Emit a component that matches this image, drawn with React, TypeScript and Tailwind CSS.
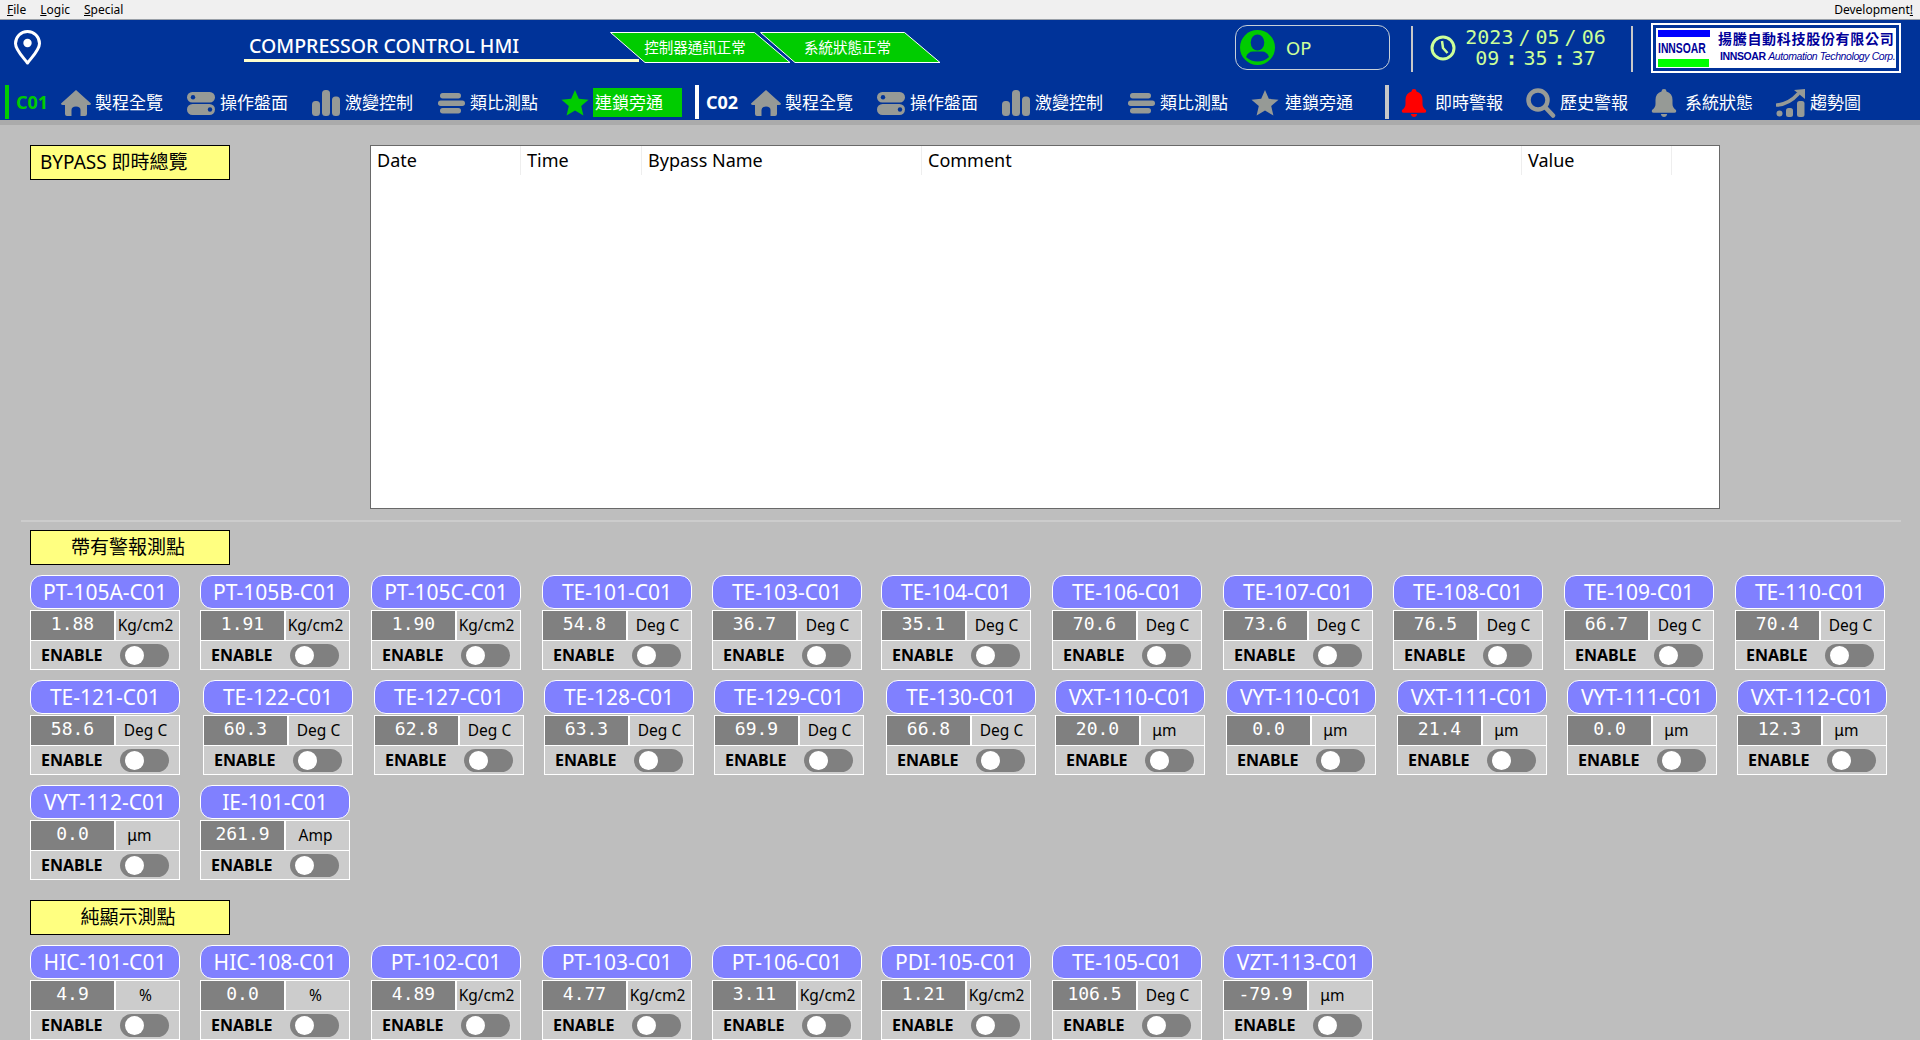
import type { ReactNode } from 'react';

type Point = { tag: string; value: string; unit: string };

const KG = 'Kg/cm2';
const DEG = 'Deg C';
// the reference leaves trailing blanks after this unit
const UM = 'μm\u00a0\u00a0\u00a0';

const alarmRowA: Point[] = [
  { tag: 'PT-105A-C01', value: '1.88', unit: KG },
  { tag: 'PT-105B-C01', value: '1.91', unit: KG },
  { tag: 'PT-105C-C01', value: '1.90', unit: KG },
  { tag: 'TE-101-C01', value: '54.8', unit: DEG },
  { tag: 'TE-103-C01', value: '36.7', unit: DEG },
  { tag: 'TE-104-C01', value: '35.1', unit: DEG },
  { tag: 'TE-106-C01', value: '70.6', unit: DEG },
  { tag: 'TE-107-C01', value: '73.6', unit: DEG },
  { tag: 'TE-108-C01', value: '76.5', unit: DEG },
  { tag: 'TE-109-C01', value: '66.7', unit: DEG },
  { tag: 'TE-110-C01', value: '70.4', unit: DEG },
];

const alarmRowB: Point[] = [
  { tag: 'TE-121-C01', value: '58.6', unit: DEG },
  { tag: 'TE-122-C01', value: '60.3', unit: DEG },
  { tag: 'TE-127-C01', value: '62.8', unit: DEG },
  { tag: 'TE-128-C01', value: '63.3', unit: DEG },
  { tag: 'TE-129-C01', value: '69.9', unit: DEG },
  { tag: 'TE-130-C01', value: '66.8', unit: DEG },
  { tag: 'VXT-110-C01', value: '20.0', unit: UM },
  { tag: 'VYT-110-C01', value: '0.0', unit: UM },
  { tag: 'VXT-111-C01', value: '21.4', unit: UM },
  { tag: 'VYT-111-C01', value: '0.0', unit: UM },
  { tag: 'VXT-112-C01', value: '12.3', unit: UM },
];

const alarmRowC: Point[] = [
  { tag: 'VYT-112-C01', value: '0.0', unit: UM },
  { tag: 'IE-101-C01', value: '261.9', unit: 'Amp' },
];

const displayRow: Point[] = [
  { tag: 'HIC-101-C01', value: '4.9', unit: '%' },
  { tag: 'HIC-108-C01', value: '0.0', unit: '%' },
  { tag: 'PT-102-C01', value: '4.89', unit: KG },
  { tag: 'PT-103-C01', value: '4.77', unit: KG },
  { tag: 'PT-106-C01', value: '3.11', unit: KG },
  { tag: 'PDI-105-C01', value: '1.21', unit: KG },
  { tag: 'TE-105-C01', value: '106.5', unit: DEG },
  { tag: 'VZT-113-C01', value: '-79.9', unit: UM },
];

const ICON_GRAY = '#969a96';

function HomeIcon() {
  return (
    <svg width="30" height="26" viewBox="0 0 30 26">
      <path
        d="M15 0 L30 13.5 Q30 15 28 15 L26 15 L26 24 Q26 26 24 26 L19.5 26 L19.5 20 Q19.5 16.5 15 16.5 Q10.5 16.5 10.5 20 L10.5 26 L6 26 Q4 26 4 24 L4 15 L2 15 Q0 15 0 13.5 Z"
        fill={ICON_GRAY}
      />
    </svg>
  );
}

function TogglesIcon() {
  return (
    <svg width="30" height="26" viewBox="0 0 30 26">
      <rect x="1" y="2" width="28" height="10.5" rx="5.2" fill={ICON_GRAY} />
      <circle cx="7" cy="7.2" r="2.2" fill="#003399" />
      <rect x="1" y="14" width="28" height="11" rx="5.5" fill={ICON_GRAY} />
      <circle cx="24" cy="19.5" r="2.2" fill="#003399" />
    </svg>
  );
}

function BarsIcon() {
  return (
    <svg width="30" height="26" viewBox="0 0 30 26">
      <rect x="1" y="11" width="8" height="15" rx="3.5" fill={ICON_GRAY} />
      <rect x="11" y="0" width="8" height="26" rx="3.5" fill={ICON_GRAY} />
      <rect x="21" y="6.5" width="8" height="19.5" rx="3.5" fill={ICON_GRAY} />
    </svg>
  );
}

function ListIcon() {
  return (
    <svg width="30" height="26" viewBox="0 0 30 26">
      <rect x="4" y="3" width="21" height="5.5" rx="2.7" fill={ICON_GRAY} />
      <rect x="2" y="10.5" width="27" height="5.5" rx="2.7" fill={ICON_GRAY} />
      <rect x="4" y="18" width="21" height="5.5" rx="2.7" fill={ICON_GRAY} />
    </svg>
  );
}

function StarIcon({ color }: { color: string }) {
  return (
    <svg width="30" height="26" viewBox="0 0 30 26">
      <path
        d="M14 0 L17.8 8.8 L27.5 9.7 L20.2 16.1 L22.4 25.6 L14 20.6 L5.6 25.6 L7.8 16.1 L0.5 9.7 L10.2 8.8 Z"
        fill={color}
      />
    </svg>
  );
}

function BellIcon({ color }: { color: string }) {
  return (
    <svg width="30" height="30" viewBox="0 0 30 30">
      <path
        d="M13 1 Q15.5 1 15.5 3.4 Q21.5 5 21.5 12 L21.5 16 Q21.5 19.5 25 22 Q25.8 24.8 23.5 24.8 L2.5 24.8 Q0.2 24.8 1 22 Q4.5 19.5 4.5 16 L4.5 12 Q4.5 5 10.5 3.4 Q10.5 1 13 1 Z"
        fill={color}
      />
      <path d="M9.8 26 L16.2 26 Q15.5 29 13 29 Q10.5 29 9.8 26 Z" fill={color} />
    </svg>
  );
}

function SearchIcon() {
  return (
    <svg width="30" height="30" viewBox="0 0 30 30">
      <circle cx="12" cy="12" r="9.5" fill="none" stroke={ICON_GRAY} strokeWidth="4.5" />
      <path d="M19 19 L27 27.5" stroke={ICON_GRAY} strokeWidth="4.5" strokeLinecap="round" />
    </svg>
  );
}

function TrendIcon() {
  return (
    <svg width="30" height="30" viewBox="0 0 30 30">
      <circle cx="3.5" cy="25.5" r="3" fill={ICON_GRAY} />
      <rect x="10" y="20" width="7" height="9" rx="2.5" fill={ICON_GRAY} />
      <rect x="21" y="13" width="7.5" height="16" rx="2.5" fill={ICON_GRAY} />
      <path d="M1 17 Q13 16 22 6" fill="none" stroke={ICON_GRAY} strokeWidth="3.5" strokeLinecap="round" />
      <path d="M18 2 L29 1 L29 11 Z" fill={ICON_GRAY} />
    </svg>
  );
}

function PinIcon() {
  return (
    <svg width="27" height="35" viewBox="0 0 27 35">
      <path
        d="M13.5 33 C9 27 1.5 20 1.5 13.5 A12 12 0 0 1 25.5 13.5 C25.5 20 18 27 13.5 33 Z"
        fill="none"
        stroke="#ffffff"
        strokeWidth="3"
        strokeLinejoin="round"
      />
      <circle cx="13.5" cy="13" r="4.2" fill="#ffffff" />
    </svg>
  );
}

function NavItem({ icon, label, active }: { icon: ReactNode; label: string; active?: boolean }) {
  return (
    <div className="flex h-[35px] w-[125px] shrink-0 items-center">
      <span className="flex w-[30px] shrink-0 justify-center">{icon}</span>
      {active ? (
        <span className="ml-[2px] flex h-[29px] w-[89px] shrink-0 items-center bg-[#00cc00] pl-[2px] text-[17px] text-white">
          {label}
        </span>
      ) : (
        <span className="ml-[4px] text-[17px] whitespace-nowrap text-white">{label}</span>
      )}
    </div>
  );
}

function StatusTag({ label, className }: { label: string; className?: string }) {
  return (
    <div className={`relative mt-[12px] flex h-[31px] w-[181px] shrink-0 items-center justify-center ${className ?? ''}`}>
      <svg className="absolute inset-0" width="181" height="31" viewBox="0 0 181 31">
        <path d="M0.5 0.5 L144.5 0.5 L180 30.5 L35 30.5 Z" fill="#00cc00" stroke="#ffffff" strokeWidth="1" />
      </svg>
      <span className="relative text-[14.5px] leading-none text-white">{label}</span>
    </div>
  );
}

function Header() {
  return (
    <header className="h-[100px] bg-[#003399]">
      <div className="flex h-[65px] items-start pl-[14px]">
        <div className="mt-[10px] shrink-0">
          <PinIcon />
        </div>
        <div className="mt-[13px] ml-[203px] w-[366px] shrink-0">
          <div className="pl-[5px] text-[19.5px] leading-[25px] font-medium whitespace-nowrap text-white">
            COMPRESSOR CONTROL HMI
          </div>
          <div className="mt-[-3px] h-[3px] w-[395px] translate-y-[4px] bg-[#ffffcc]" />
        </div>
        <StatusTag label="控制器通訊正常" className="pr-[11px]" />
        <StatusTag label="系統狀態正常" className="ml-[-31px] pr-[6px]" />

        <div className="mt-[5px] ml-[294px] flex h-[45px] w-[155px] shrink-0 items-center rounded-[12px] border border-[#c8d0d8] pl-[4px]">
          <svg width="35" height="35" viewBox="0 0 35 35">
            <circle cx="17.5" cy="17.5" r="17.5" fill="#00cc00" />
            <ellipse cx="17.5" cy="12.5" rx="6.8" ry="8" fill="#003399" />
            <path d="M6 27 Q8 21.5 13 21.5 L22 21.5 Q27 21.5 29 27 Q24 31.5 17.5 31.5 Q11 31.5 6 27 Z" fill="#003399" />
          </svg>
          <span className="mt-[2px] ml-[11px] font-['DejaVu_Sans',sans-serif] text-[18px] text-[#ccff99]">OP</span>
        </div>

        <div className="mt-[6px] ml-[21px] h-[46px] w-[2px] shrink-0 bg-[#c8c8c8]" />
        <svg className="mt-[15px] ml-[17px] shrink-0" width="26" height="26" viewBox="0 0 26 26">
          <circle cx="13" cy="13" r="11" fill="none" stroke="#ccff99" strokeWidth="3" />
          <path d="M12 6 L13 13 L17.5 18" fill="none" stroke="#ccff99" strokeWidth="2.5" />
        </svg>
        <div className="mt-[7px] ml-[9px] w-[141px] shrink-0 text-center font-['DejaVu_Sans_Mono',monospace] text-[20px] leading-[21px] text-[#ccff99]">
          <div>
            2023<span className="mx-[5px]">/</span>05<span className="mx-[5px]">/</span>06
          </div>
          <div>
            09<span className="mx-[6px] font-bold">:</span>35<span className="mx-[6px] font-bold">:</span>37
          </div>
        </div>
        <div className="mt-[6px] ml-[25px] h-[46px] w-[2px] shrink-0 bg-[#c8c8c8]" />

        <div className="mt-[3px] ml-[18px] w-[250px] shrink-0 border-2 border-white p-[3px]">
          <div className="flex h-[40px] bg-white">
            <div className="flex w-[58px] shrink-0 flex-col items-start pt-[2px] pl-[2px]">
              <div className="h-[7px] w-[52px] bg-[#0000ff]" />
              <div className="h-[22px] w-[60px] origin-left scale-x-[0.74] font-['Liberation_Sans',sans-serif] text-[14px] leading-[22px] font-bold text-[#000099]">
                INNSOAR
              </div>
              <div className="h-[8px] w-[51px] bg-[#00ff00]" />
            </div>
            <div className="flex min-w-0 flex-col pl-[4px]">
              <div className="mt-[3px] text-[14px] leading-[16px] font-bold tracking-[0.7px] whitespace-nowrap text-[#000099]">
                揚騰自動科技股份有限公司
              </div>
              <div className="mt-[3px] ml-[2px] font-['Liberation_Sans',sans-serif] text-[10.5px] leading-[13px] tracking-[-0.4px] whitespace-nowrap text-[#000099]">
                <span className="font-bold">INNSOAR</span> <span className="italic">Automation Technology Corp.</span>
              </div>
            </div>
          </div>
        </div>
      </div>

      <nav className="flex h-[35px] items-start pl-[5px]">
        <div className="h-[34px] w-[4px] shrink-0 bg-[#00cc00]" />
        <div className="ml-[7px] flex h-[35px] w-[45px] shrink-0 items-center text-[18px] font-bold text-[#00cc00]">C01</div>
        <NavItem icon={<HomeIcon />} label="製程全覽" />
        <NavItem icon={<TogglesIcon />} label="操作盤面" />
        <NavItem icon={<BarsIcon />} label="激變控制" />
        <NavItem icon={<ListIcon />} label="類比測點" />
        <NavItem icon={<StarIcon color="#00cc00" />} label="連鎖旁通" active />
        <div className="ml-[9px] h-[34px] w-[4px] shrink-0 bg-white" />
        <div className="ml-[7px] flex h-[35px] w-[45px] shrink-0 items-center text-[18px] font-bold text-white">C02</div>
        <NavItem icon={<HomeIcon />} label="製程全覽" />
        <NavItem icon={<TogglesIcon />} label="操作盤面" />
        <NavItem icon={<BarsIcon />} label="激變控制" />
        <NavItem icon={<ListIcon />} label="類比測點" />
        <NavItem icon={<StarIcon color={ICON_GRAY} />} label="連鎖旁通" />
        <div className="ml-[9px] h-[34px] w-[4px] shrink-0 bg-[#c8c8c8]" />
        <div className="ml-[12px] flex">
          <NavItem icon={<BellIcon color="#ff0000" />} label="即時警報" />
          <NavItem icon={<SearchIcon />} label="歷史警報" />
          <NavItem icon={<BellIcon color={ICON_GRAY} />} label="系統狀態" />
          <NavItem icon={<TrendIcon />} label="趨勢圖" />
        </div>
      </nav>
    </header>
  );
}

function SectionLabel({ children, center }: { children: ReactNode; center?: boolean }) {
  return (
    <div
      className={`flex h-[35px] w-[200px] shrink-0 items-center border border-black bg-[#ffff80] text-[19px] text-black ${
        center ? 'justify-center pr-[4px]' : 'pl-[9px]'
      }`}
    >
      {children}
    </div>
  );
}

function PointCard({ point }: { point: Point }) {
  return (
    <div className="flex h-[95px] w-[150px] flex-col">
      <div className="flex h-[34px] items-center justify-center rounded-[12px] border border-white bg-[#8080ff] pt-[2px] text-[21px] whitespace-nowrap text-white">
        {point.tag}
      </div>
      <div className="mt-[1px] flex h-[60px] flex-col border border-white bg-white">
        <div className="flex h-[29px] gap-[2px]">
          <div className="flex w-[83px] shrink-0 items-center justify-center bg-[#808080] pb-[4px] font-['DejaVu_Sans_Mono',monospace] text-[18px] text-white">
            {point.value}
          </div>
          <div className="flex flex-1 items-center justify-center bg-[#cccccc] pr-[4px] text-[15.5px] text-black">{point.unit}</div>
        </div>
        <div className="mt-[1px] flex h-[28px] items-center bg-[#cccccc]">
          <span className="ml-[10px] w-[79px] shrink-0 text-[16px] font-bold text-black">ENABLE</span>
          <span className="flex h-[23px] w-[49px] shrink-0 items-center rounded-full bg-[#808080] pl-[5px]">
            <span className="h-[19px] w-[19px] rounded-full bg-white" />
          </span>
        </div>
      </div>
    </div>
  );
}

const colsA = 'grid grid-cols-[170px_171px_171px_170px_169px_171px_171px_170px_171px_171px_150px]';
const colsB = 'grid grid-cols-[173px_171px_170px_170px_172px_169px_171px_171px_170px_170px_150px]';

function PointRow({ points, cols }: { points: Point[]; cols: string }) {
  return (
    <div className={cols}>
      {points.map((point) => (
        <PointCard key={point.tag} point={point} />
      ))}
    </div>
  );
}

const tableColumns = [
  { label: 'Date', width: 'w-[150px]' },
  { label: 'Time', width: 'w-[121px]' },
  { label: 'Bypass Name', width: 'w-[280px]' },
  { label: 'Comment', width: 'w-[600px]' },
  { label: 'Value', width: 'w-[150px]' },
];

function BypassTable() {
  return (
    <div className="ml-[140px] h-[364px] w-[1350px] shrink-0 border border-[#696969] bg-white">
      <div className="flex h-[29px]">
        {tableColumns.map((col) => (
          <div key={col.label} className={`${col.width} flex shrink-0 items-center border-r border-[#eeeeee] pl-[6px] text-[18px] text-black`}>
            {col.label}
          </div>
        ))}
      </div>
    </div>
  );
}

export default function App() {
  return (
    <div className="flex h-[1040px] w-[1920px] flex-col overflow-hidden bg-[#bebebe] font-['Noto_Sans','Noto_Sans_CJK_TC',sans-serif]">
      <div className="flex h-[20px] shrink-0 items-center justify-between border-b border-[#9aa0a8] bg-[#f0f0f0] pr-[7px] pl-[7px] text-[12px] text-black">
        <div className="flex gap-[14px]">
          <span><span className="underline">F</span>ile</span>
          <span><span className="underline">L</span>ogic</span>
          <span><span className="underline">S</span>pecial</span>
        </div>
        <span>Development<span className="underline">!</span></span>
      </div>

      <Header />
      <div className="h-[5px] shrink-0 bg-[#ababab]" />

      <main className="flex flex-col px-[30px] pt-[20px]">
        <div className="flex items-start">
          <SectionLabel>BYPASS 即時總覽</SectionLabel>
          <BypassTable />
        </div>

        <div className="mt-[11px] ml-[-9px] h-[2px] w-[1880px] bg-[#cccccc]" />

        <div className="mt-[8px]">
          <SectionLabel center>帶有警報測點</SectionLabel>
        </div>
        <div className="mt-[10px] flex flex-col gap-[10px]">
          <PointRow points={alarmRowA} cols={colsA} />
          <PointRow points={alarmRowB} cols={colsB} />
          <PointRow points={alarmRowC} cols={colsA} />
        </div>

        <div className="mt-[20px]">
          <SectionLabel center>純顯示測點</SectionLabel>
        </div>
        <div className="mt-[10px]">
          <PointRow points={displayRow} cols={colsA} />
        </div>
      </main>
    </div>
  );
}
